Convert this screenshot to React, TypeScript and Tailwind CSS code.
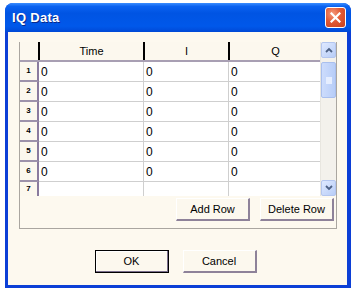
import React from "react";

function XpButton({ label, isDefault = false, className = "" }: { label: string; isDefault?: boolean; className?: string }) {
  return (
    <div
      className={
        "h-[23px] w-[74px] flex items-center justify-center text-[11px] text-black bg-[#fcf8ee] " +
        (isDefault
          ? "border border-black shadow-[inset_-1px_-1px_0_#7a6e8c,inset_1px_1px_0_#ffffff] "
          : "border-t border-l border-t-[#ffffff] border-l-[#ffffff] border-b-2 border-r-2 border-b-[#8e8299] border-r-[#8e8299] ") +
        className
      }
    >
      {label}
    </div>
  );
}

function Chevron({ up }: { up: boolean }) {
  return (
    <svg width="8" height="6" viewBox="0 0 8 6">
      <path
        d={up ? "M1 5 L4 2 L7 5" : "M1 1 L4 4 L7 1"}
        stroke="#4d6185"
        strokeWidth="1.8"
        fill="none"
      />
    </svg>
  );
}

export default function App() {
  const rows = ["1", "2", "3", "4", "5", "6"];
  return (
    <div className="w-[352px] h-[306px] bg-white pt-[3px] pl-[5px] font-['Liberation_Sans',Arial,sans-serif]">
      <div className="w-[346px] h-[285px] flex flex-col rounded-t-[8px] bg-[#0c3fd6] overflow-hidden">
        {/* Title bar */}
        <div className="h-[29px] shrink-0 flex items-center pl-[7px] pr-[5px] bg-[linear-gradient(180deg,#3a8dff_0%,#0a62f0_12%,#0054e3_35%,#0058ea_80%,#0049d6_100%)]">
          <span className="text-white font-bold text-[13px] tracking-[0.3px] [text-shadow:1px_1px_0_#0a2a8a]">IQ Data</span>
          <div className="ml-auto w-[21px] h-[21px] rounded-[3px] border border-white bg-[radial-gradient(circle_at_35%_30%,#f59a7c_0%,#e25a35_45%,#c8401c_100%)] flex items-center justify-center">
            <svg width="11" height="11" viewBox="0 0 11 11">
              <path d="M1.5 1.5 L9.5 9.5 M9.5 1.5 L1.5 9.5" stroke="white" strokeWidth="2.2" strokeLinecap="square" />
            </svg>
          </div>
        </div>
        {/* Body */}
        <div className="flex-1 ml-[3px] mr-[4px] mb-[3px] bg-[#fdf9ef] pt-[10px] pl-[11px] flex flex-col">
          {/* Grid box */}
          <div className="w-[318px] h-[187px] border-l border-r border-b border-[#aaa6a0] flex flex-col">
            <div className="h-[154px] flex">
              <div className="w-[301px] flex flex-col overflow-hidden">
                {/* header */}
                <div className="h-[20px] flex shrink-0 border-b-2 border-[#a89fb3] text-[11px] text-black">
                  <div className="w-[18px] shrink-0 bg-[#fcf8ee]" />
                  <div className="w-[105px] shrink-0 border-l-2 border-black bg-[#fcf8ee] flex items-center justify-center">Time</div>
                  <div className="w-[85px] shrink-0 border-l-2 border-black bg-[#fcf8ee] flex items-center justify-center">I</div>
                  <div className="w-[93px] shrink-0 border-l-2 border-black bg-[#fcf8ee] flex items-center justify-center">Q</div>
                </div>
                {rows.map((r) => (
                  <div key={r} className="h-[20px] flex shrink-0 text-[11px] text-black">
                    <div className="w-[19px] shrink-0 bg-[#fcf8ee] border-b-2 border-b-[#9d92ab] border-r-2 border-r-[#8a7b9e] flex items-center justify-center text-[8px] font-bold">{r}</div>
                    <div className="w-[105px] shrink-0 bg-white border-b border-r border-[#cfcfcf] flex items-center pl-[2px] text-[12px]">0</div>
                    <div className="w-[85px] shrink-0 bg-white border-b border-r border-[#cfcfcf] flex items-center pl-[2px] text-[12px]">0</div>
                    <div className="w-[92px] shrink-0 bg-white border-b border-r border-[#cfcfcf] flex items-center pl-[2px] text-[12px]">0</div>
                  </div>
                ))}
                <div className="h-[14px] flex shrink-0 text-[11px] text-black">
                  <div className="w-[19px] shrink-0 bg-[#fcf8ee] border-r-2 border-r-[#8a7b9e] flex items-center justify-center text-[8px] font-bold">7</div>
                  <div className="w-[105px] shrink-0 bg-white border-r border-[#cfcfcf]" />
                  <div className="w-[85px] shrink-0 bg-white border-r border-[#cfcfcf]" />
                  <div className="w-[92px] shrink-0 bg-white border-r border-[#cfcfcf]" />
                </div>
              </div>
              {/* scrollbar */}
              <div className="w-[16px] flex flex-col bg-[#f3f1ec] border-l border-[#e8e6e0]">
                <div className="h-[16px] rounded-[2px] bg-[linear-gradient(135deg,#dfe9ff,#b8cdf7)] border border-[#b4c6ef] flex items-center justify-center">
                  <Chevron up={true} />
                </div>
                <div className="mt-[4px] h-[36px] rounded-[2px] bg-[linear-gradient(90deg,#cddcfc,#b7cdf8)] border border-[#a9bfee] flex items-center justify-center">
                  <div className="w-[6px] h-[7px] bg-[#e6eeff]" />
                </div>
                <div className="flex-1" />
                <div className="h-[16px] rounded-[2px] bg-[linear-gradient(135deg,#dfe9ff,#b8cdf7)] border border-[#b4c6ef] flex items-center justify-center">
                  <Chevron up={false} />
                </div>
              </div>
            </div>
            <div className="flex justify-end gap-[10px] pr-[2px] mt-[2px]">
              <XpButton label="Add Row" />
              <XpButton label="Delete Row" />
            </div>
          </div>
          <div className="flex justify-center gap-[14px] mt-[21px] pr-[15px]">
            <XpButton label="OK" isDefault={true} />
            <XpButton label="Cancel" />
          </div>
        </div>
      </div>
    </div>
  );
}
